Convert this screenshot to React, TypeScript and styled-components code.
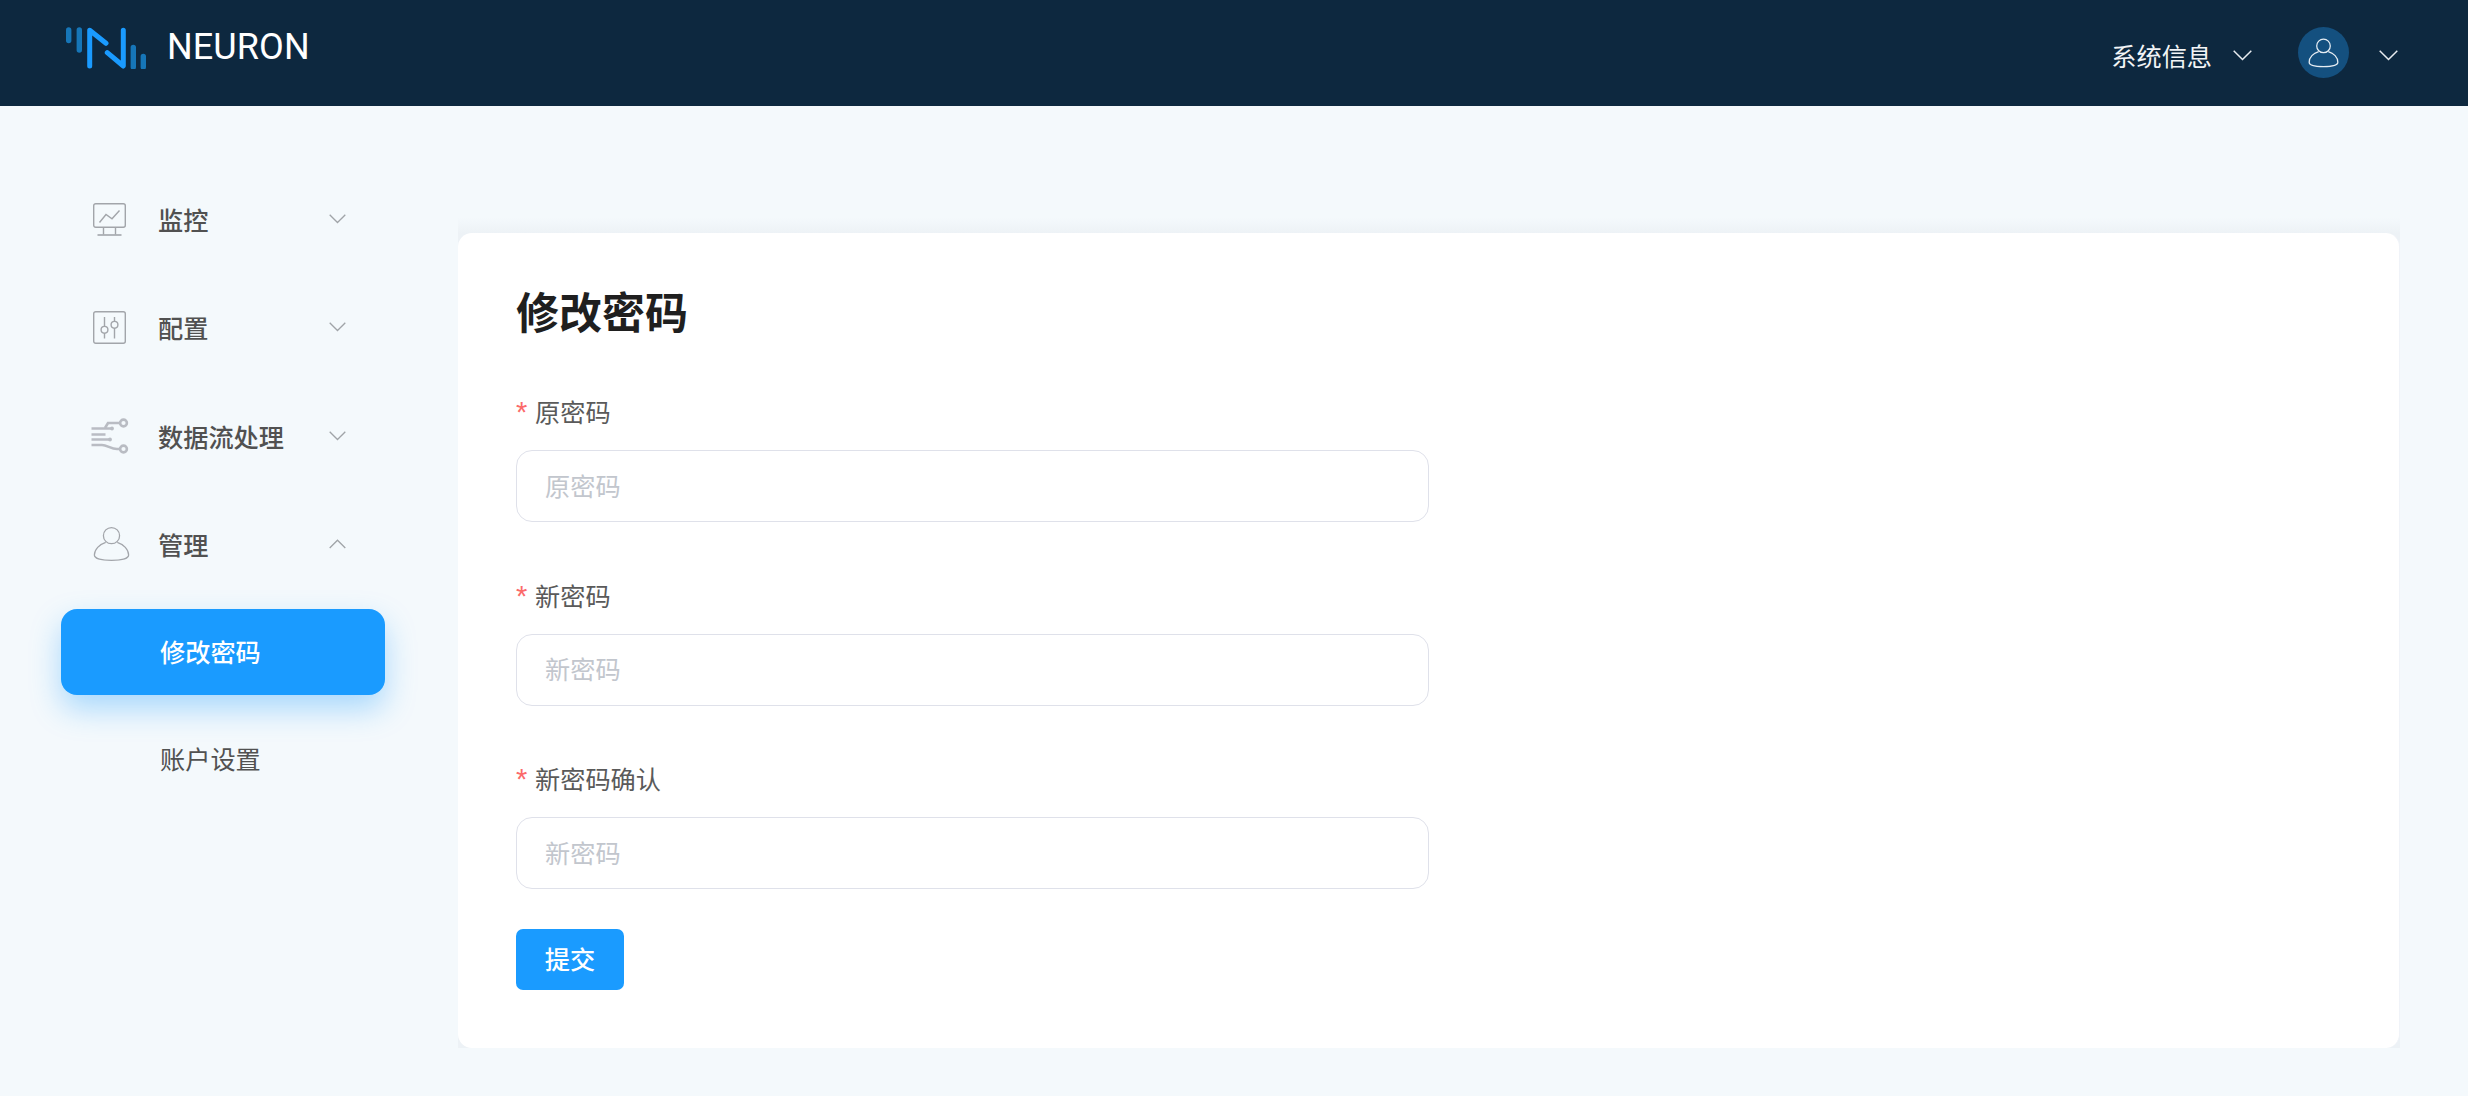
import React from 'react';
import styled, { createGlobalStyle } from 'styled-components';

const Global = createGlobalStyle`
  html, body { margin: 0; padding: 0; }
  body {
    width: 2468px; height: 1096px; overflow: hidden; background: #f4f9fc;
    font-family: "Noto Sans CJK SC", "Noto Sans", sans-serif;
    font-size: 25.2px;
  }
  * { box-sizing: border-box; }
`;

const Page = styled.div`
  display: flex; flex-direction: column; width: 2468px; height: 1096px; background: #f4f9fc;
`;

const Header = styled.header`
  flex: 0 0 106px; height: 106px; background: #0d283f; color: #fff;
  display: flex; align-items: center; justify-content: space-between; padding: 0 70px 0 66px;
`;
const Brand = styled.div`
  display: flex; align-items: center; gap: 21px; margin-top: -11px;
`;
const BrandName = styled.span`
  font-family: Roboto, "Liberation Sans", sans-serif; font-size: 36px; font-weight: 400; line-height: 42px; letter-spacing: 0.1px; position: relative; top: -1px;
`;
const HeaderRight = styled.div`
  display: flex; align-items: center;
`;
const HeaderText = styled.span`
  font-size: 25.2px; line-height: 36px; color: #f2f4f6; margin-top: 3px;
`;
const HeaderChevron = styled.svg<{ $left?: number }>`
  width: 19px; height: 11px; display: block; margin-top: 5px; margin-left: ${p => p.$left || 0}px;
  fill: none; stroke: #e8ecf0; stroke-width: 1.5;
`;
const Avatar = styled.div`
  width: 51px; height: 51px; border-radius: 50%; background: #14507f; margin: 0 30px 2px 46px;
  display: flex; align-items: center; justify-content: center;
`;

const Body = styled.div`
  flex: 1; display: flex; min-height: 0;
`;
const Side = styled.nav`
  flex: 0 0 458px; padding: 70px 73px 0 61px; display: flex; flex-direction: column; gap: 22.33px;
`;
const MenuRow = styled.div`
  height: 86px; display: flex; align-items: center; padding-left: 30px; padding-right: 39px;
  color: #515151; font-weight: 500; font-size: 25.2px;
`;
const MenuIconSlot = styled.div<{ $shift?: number }>`
  width: 67px; flex: none; display: flex; align-items: center;
  margin-left: ${p => p.$shift || 0}px; margin-right: ${p => -(p.$shift || 0)}px;
`;
const MenuLabel = styled.span`
  flex: 1; line-height: 36px;
`;
const MenuChevron = styled.svg`
  width: 17px; height: 10px; display: block; fill: none; stroke: #a0a4a8; stroke-width: 1.3;
`;
const SubRow = styled.div<{ $active?: boolean }>`
  height: 86px; border-radius: 16px; display: flex; align-items: center; padding-left: 99px;
  padding-bottom: ${p => (p.$active ? 3 : 6)}px;
  font-size: 25.2px; line-height: 36px;
  color: ${p => (p.$active ? '#fff' : '#515151')};
  font-weight: ${p => (p.$active ? 500 : 400)};
  background: ${p => (p.$active ? '#1a9bff' : 'transparent')};
  box-shadow: ${p => (p.$active ? '0 14px 30px rgba(26,155,255,0.34)' : 'none')};
`;

const Main = styled.main`
  flex: 1; padding: 127px 68px 48px 0; display: flex;
`;
const CardWrap = styled.div`
  flex: 1; background: #edf2f6; position: relative;
  &::before {
    content: ''; position: absolute; left: 0; right: 0; top: -15px; height: 15px;
    background: linear-gradient(to bottom, rgba(237,242,246,0), #edf2f6);
  }
`;
const Card = styled.section`
  height: 100%; background: #fff; border-radius: 14px; padding: 44px 58px 0;
  border-right: 1px solid #f0f3f8;
`;
const Title = styled.h1`
  margin: 0 0 53px; font-size: 43px; line-height: 66px; font-weight: 700; color: #1f1f1f;
`;
const Form = styled.form`
  width: 913px; display: flex; flex-direction: column;
`;
const Field = styled.div`
  display: flex; flex-direction: column; margin-bottom: 57.5px;
  &:last-of-type { margin-bottom: 40px; }
`;
const Label = styled.label`
  display: flex; align-items: center; height: 36px; margin-bottom: 18px; padding-bottom: 6px; color: #5a5a5a; font-size: 25.2px; line-height: 36px;
`;
const Star = styled.span`
  color: #fb6a6a; font-family: "Liberation Sans", sans-serif; font-size: 29px; width: 19px; flex: none; position: relative; top: 1px; left: 0;
`;
const Input = styled.input`
  height: 72px; width: 100%; border: 1.5px solid #dfe1ea; border-radius: 16px; padding: 0 28px 3px; background: #fff;
  font-family: inherit; font-size: 25.2px; outline: none;
  &::placeholder { color: #c2c6cd; opacity: 1; }
`;
const Submit = styled.button`
  align-self: flex-start; width: 108px; height: 61px; border: 0; border-radius: 7px; background: #1a9bff; color: #fff;
  font-family: inherit; font-size: 25.2px; font-weight: 500; padding: 0 0 4px;
`;

const Logo = () => (
  <svg width="80" height="42" viewBox="0 0 80 42" fill="none" strokeLinecap="round" style={{ display: 'block' }}>
    <g stroke="#1676b8" strokeWidth="5.4">
      <path d="M2.7 3v10.5M13.3 3v20M67.3 20.5V40M77.3 29.5V40" />
    </g>
    <g stroke="#1a9bff" strokeWidth="5" strokeLinejoin="round">
      <path d="M23.7 39V3.2L40 16.3M41.3 25.7L57.3 39V3.2" />
    </g>
  </svg>
);

const Person = ({ size, color, sw }: { size: number; color: string; sw: number }) => (
  <svg width={size} height={size} viewBox="0 0 32 32" fill="none" stroke={color} strokeWidth={sw} style={{ display: 'block' }}>
    <circle cx="16" cy="9.2" r="7" />
    <path d="M11 15C5.5 16.8 1.2 21 1.2 26c0 3 6.6 4.6 14.8 4.6s14.8-1.6 14.8-4.6c0-5-4.3-9.2-9.8-11" />
  </svg>
);

const Monitor = () => (
  <svg width="33" height="33" viewBox="0 0 33 33" fill="none" stroke="#a2a5aa" strokeWidth="1.4" style={{ display: 'block' }}>
    <rect x="0.7" y="0.7" width="31.6" height="23.6" rx="2" />
    <path d="M6.5 19.5L13 11.5l6 4.3L26.5 7.5" />
    <path d="M10.5 24.5v7M22.5 24.5v7" />
    <path d="M4.5 32h24" strokeWidth="1.6" />
  </svg>
);
const Sliders = () => (
  <svg width="33" height="33" viewBox="0 0 33 33" fill="none" stroke="#a2a5aa" strokeWidth="1.4" style={{ display: 'block' }}>
    <rect x="0.7" y="0.7" width="31.6" height="31.6" rx="2" />
    <path d="M11.5 6v9.5M11.5 22v5.5M21.5 6v4.5M21.5 17v10.5" />
    <circle cx="11.5" cy="18.8" r="3.4" />
    <circle cx="21.5" cy="13.8" r="3.4" />
  </svg>
);
const Flow = () => (
  <svg width="38" height="36" viewBox="0 0 38 36" fill="none" stroke="#b9bcc3" strokeWidth="2.6" style={{ display: 'block' }}>
    <circle cx="32.5" cy="5" r="3.4" />
    <circle cx="32.5" cy="31" r="3.4" />
    <path d="M29 5H17l-3 5" />
    <path d="M0.5 10.5h20M0.5 16.5h14M0.5 21.5h18M0.5 27h10.5c5 0 9 4 15 4h3" />
    <circle cx="21" cy="10.5" r="1.9" fill="#b9bcc3" stroke="none" />
    <circle cx="19" cy="21.5" r="1.9" fill="#b9bcc3" stroke="none" />
  </svg>
);

const Down = () => <polyline points="0.7,0.7 8.5,8.5 16.3,0.7" />;
const Up = () => <polyline points="0.7,9 8.5,1.2 16.3,9" />;

const fields = [
  { label: '原密码', placeholder: '原密码' },
  { label: '新密码', placeholder: '新密码' },
  { label: '新密码确认', placeholder: '新密码' },
];

export default function App() {
  return (
    <Page>
      <Global />
      <Header>
        <Brand>
          <Logo />
          <BrandName>NEURON</BrandName>
        </Brand>
        <HeaderRight>
          <HeaderText>系统信息</HeaderText>
          <HeaderChevron $left={21} viewBox="0 0 19 11"><polyline points="0.7,0.7 9.5,9.5 18.3,0.7" /></HeaderChevron>
          <Avatar><Person size={31} color="#e6edf3" sw={1.3} /></Avatar>
          <HeaderChevron viewBox="0 0 19 11"><polyline points="0.7,0.7 9.5,9.5 18.3,0.7" /></HeaderChevron>
        </HeaderRight>
      </Header>
      <Body>
        <Side>
          <MenuRow><MenuIconSlot $shift={2}><Monitor /></MenuIconSlot><MenuLabel>监控</MenuLabel><MenuChevron viewBox="0 0 17 10"><Down /></MenuChevron></MenuRow>
          <MenuRow><MenuIconSlot $shift={2}><Sliders /></MenuIconSlot><MenuLabel>配置</MenuLabel><MenuChevron viewBox="0 0 17 10"><Down /></MenuChevron></MenuRow>
          <MenuRow><MenuIconSlot><Flow /></MenuIconSlot><MenuLabel>数据流处理</MenuLabel><MenuChevron viewBox="0 0 17 10"><Down /></MenuChevron></MenuRow>
          <MenuRow><MenuIconSlot $shift={2}><Person size={37} color="#a2a5aa" sw={1.1} /></MenuIconSlot><MenuLabel>管理</MenuLabel><MenuChevron viewBox="0 0 17 10"><Up /></MenuChevron></MenuRow>
          <SubRow $active>修改密码</SubRow>
          <SubRow>账户设置</SubRow>
        </Side>
        <Main>
          <CardWrap>
            <Card>
              <Title>修改密码</Title>
              <Form>
                {fields.map(f => (
                  <Field key={f.label}>
                    <Label><Star>*</Star>{f.label}</Label>
                    <Input type="password" placeholder={f.placeholder} />
                  </Field>
                ))}
                <Submit type="button">提交</Submit>
              </Form>
            </Card>
          </CardWrap>
        </Main>
      </Body>
    </Page>
  );
}
